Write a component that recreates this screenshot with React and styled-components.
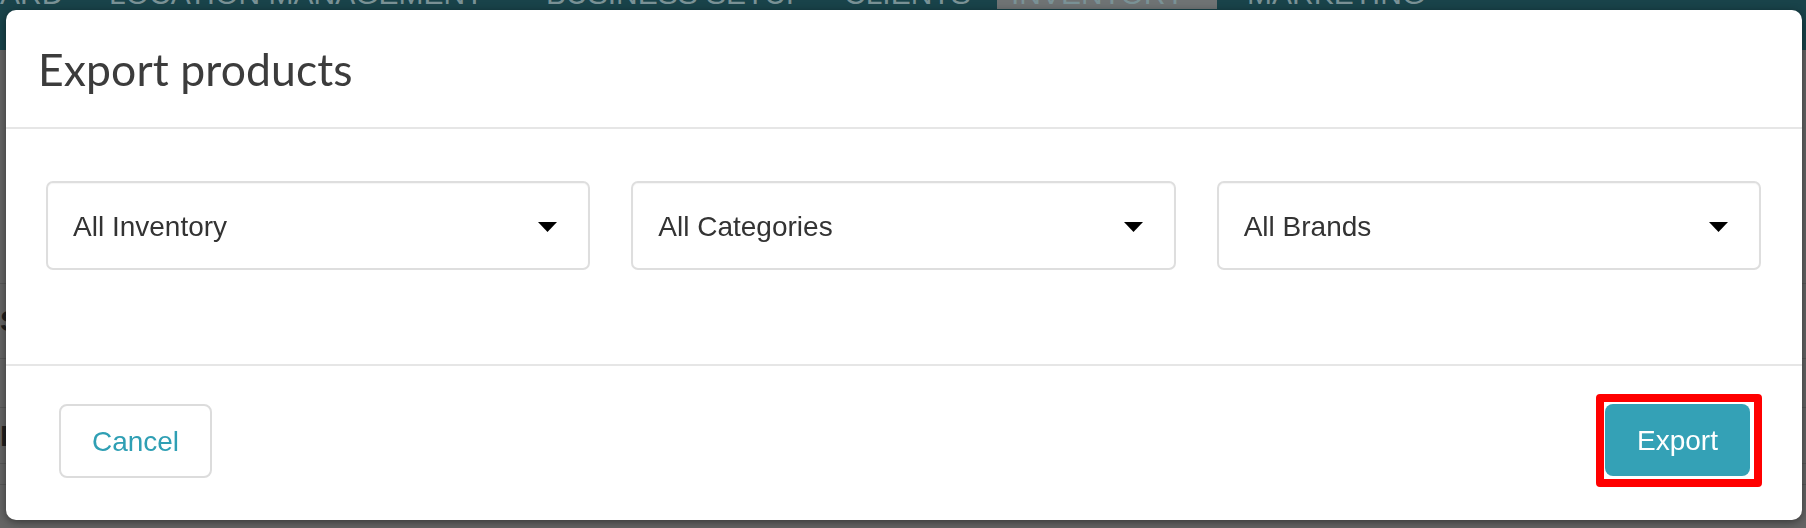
import React from "react";
import styled, { createGlobalStyle } from "styled-components";

const GlobalStyle = createGlobalStyle`
  html, body {
    margin: 0;
    padding: 0;
    height: 100%;
    overflow: hidden;
    background: #626262;
  }
`;

const Page = styled.div`
  height: 100vh;
  display: flex;
  flex-direction: column;
`;

const TopNav = styled.nav`
  height: 50px;
  flex: none;
  background: #19434a;
  display: grid;
  grid-template-columns: 109px 437px 298px 153px 250px auto;
  align-items: start;
  overflow: hidden;
  font-family: "Liberation Sans", sans-serif;
`;

const NavItem = styled.div`
  margin-top: -21px;
  width: ${(p) => (p.active ? "220px" : "auto")};
  box-sizing: border-box;
  padding: ${(p) => (p.active ? "0 0 0 14px" : "0")};
  text-align: ${(p) => (p.alignRight ? "right" : "left")};
  padding-right: ${(p) => (p.alignRight ? "51px" : "0")};
  font-size: 30px;
  line-height: 30px;
  color: #7a9296;
  background: ${(p) => (p.active ? "#6f7374" : "transparent")};
  white-space: nowrap;
  overflow: hidden;
`;

const PageBody = styled.div`
  flex: 1;
  display: flex;
  flex-direction: column;
  background: #646464;
  font-family: "Liberation Sans", sans-serif;
  font-weight: 700;
  color: #1e1e1e;
`;

const PageRow = styled.div`
  height: ${(p) => p.h}px;
  flex: none;
  display: flex;
  align-items: center;
  font-size: 30px;
  border-bottom: ${(p) => (p.line ? "1px solid #575757" : "none")};
  overflow: hidden;
`;

const Modal = styled.div`
  position: fixed;
  top: 10px;
  left: 6px;
  right: 4px;
  bottom: 8px;
  background: #fff;
  border-radius: 10px;
  box-shadow: 0 2px 8px rgba(0, 0, 0, 0.45);
  display: flex;
  flex-direction: column;
  overflow: hidden;
`;

const Header = styled.header`
  height: 117px;
  flex: none;
  display: flex;
  align-items: center;
  padding: 0 32px;
  border-bottom: 2px solid #e6e6e6;
`;

const Title = styled.h2`
  margin: 0;
  font-family: Lato, "Open Sans", sans-serif;
  font-weight: 400;
  font-size: 44.5px;
  color: #3c3c3c;
  letter-spacing: 0.1px;
`;

const Body = styled.div`
  height: 237px;
  flex: none;
  box-sizing: border-box;
  padding: 52px 41px 0 40px;
  border-bottom: 2px solid #e6e6e6;
  display: grid;
  grid-template-columns: repeat(3, 1fr);
  column-gap: 41px;
  align-items: start;
`;

const Select = styled.div`
  height: 89px;
  box-sizing: border-box;
  border: 2px solid #dedede;
  border-radius: 7px;
  box-shadow: inset 0 1px 1px rgba(0, 0, 0, 0.04);
  display: flex;
  align-items: center;
  justify-content: space-between;
  padding: 3px 31px 0 25px;
  font-family: "Liberation Sans", Arial, sans-serif;
  font-size: 28px;
  color: #333;
`;

const Caret = styled.svg`
  width: 19px;
  height: 10px;
  flex: none;
`;

const Footer = styled.footer`
  flex: 1;
  display: flex;
  align-items: center;
  justify-content: space-between;
  padding: 0 40px 5px 53px;
`;

const Button = styled.button`
  height: ${(p) => (p.primary ? 72 : 74)}px;
  width: ${(p) => (p.primary ? 145 : 153)}px;
  box-sizing: border-box;
  border-radius: 8px;
  border: ${(p) => (p.primary ? "none" : "2px solid #dcdcdc")};
  background: ${(p) => (p.primary ? "#34a1b6" : "#fff")};
  color: ${(p) => (p.primary ? "#fff" : "#2f9fb4")};
  font-family: "Liberation Sans", Arial, sans-serif;
  font-size: 28px;
  padding: 2px 0 0;
  cursor: pointer;
`;

const Highlight = styled.span`
  display: inline-flex;
  border: 8px solid #ff0000;
  border-radius: 4px;
  padding: 2px 4px 3px 1px;
`;

const navItems = [
  { label: "ARD", alignRight: true },
  { label: "LOCATION MANAGEMENT" },
  { label: "BUSINESS SETUP" },
  { label: "CLIENTS" },
  { label: "INVENTORY", active: true },
  { label: "MARKETING" },
];

const selects = ["All Inventory", "All Categories", "All Brands"];

function SelectBox({ label }) {
  return (
    <Select>
      <span>{label}</span>
      <Caret viewBox="0 0 19 10">
        <polygon points="0,0 19,0 9.5,10" fill="#000" />
      </Caret>
    </Select>
  );
}

export default function App() {
  return (
    <>
      <GlobalStyle />
      <Page>
        <TopNav>
          {navItems.map((n) => (
            <NavItem key={n.label} active={n.active} alignRight={n.alignRight}>
              {n.label}
            </NavItem>
          ))}
        </TopNav>
        <PageBody>
          <PageRow h={100} />
          <PageRow h={133} line />
          <PageRow h={74} line>S</PageRow>
          <PageRow h={48} line />
          <PageRow h={55} line>R</PageRow>
          <PageRow h={20} line />
        </PageBody>
      </Page>
      <Modal>
        <Header>
          <Title>Export products</Title>
        </Header>
        <Body>
          {selects.map((s) => (
            <SelectBox key={s} label={s} />
          ))}
        </Body>
        <Footer>
          <Button>Cancel</Button>
          <Highlight>
            <Button primary>Export</Button>
          </Highlight>
        </Footer>
      </Modal>
    </>
  );
}
